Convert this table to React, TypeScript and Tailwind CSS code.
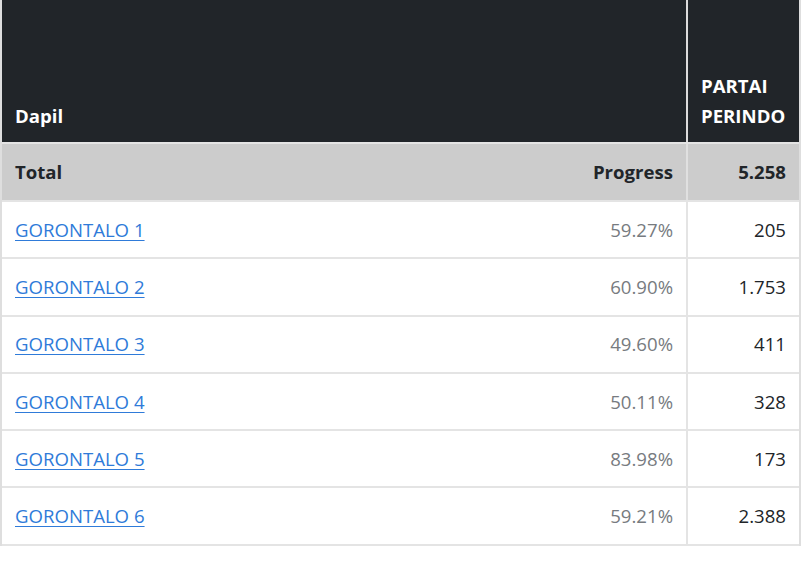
import React from "react";

const rows = [
  { name: "GORONTALO 1", pct: "59.27%", val: "205" },
  { name: "GORONTALO 2", pct: "60.90%", val: "1.753" },
  { name: "GORONTALO 3", pct: "49.60%", val: "411" },
  { name: "GORONTALO 4", pct: "50.11%", val: "328" },
  { name: "GORONTALO 5", pct: "83.98%", val: "173" },
  { name: "GORONTALO 6", pct: "59.21%", val: "2.388" },
];

export default function App() {
  return (
    <div
      className="w-[801px] h-[569px] bg-white text-[18.6px] text-[#212529]"
      style={{ fontFamily: '"Open Sans", "Noto Sans", sans-serif' }}
    >
      <div className="w-[801px] border-l-2 border-r-2 border-[#dedede]">
        {/* Header */}
        <div className="flex h-[142px] bg-[#212529] text-white font-bold">
          <div className="w-[684px] flex items-end px-[13px] pb-[11px] leading-[30px]">Dapil</div>
          <div className="w-[2px] bg-[#dcdcdc]" />
          <div className="flex-1 flex flex-col justify-end px-[13px] pb-[11px] leading-[30px]">
            <div>PARTAI</div>
            <div>PERINDO</div>
          </div>
        </div>
        {/* Total row */}
        <div className="flex h-[60px] bg-[#cccccc] font-bold border-t-2 border-b-2 border-[#e4e4e4]">
          <div className="w-[684px] flex items-center justify-between px-[13px]">
            <span>Total</span>
            <span>Progress</span>
          </div>
          <div className="w-[2px] bg-[#e0e0e0]" />
          <div className="flex-1 flex items-center justify-end px-[13px]">5.258</div>
        </div>
        {rows.map((r) => (
          <div key={r.name} className="flex h-[57.3px] border-b-2 border-[#e4e4e4]">
            <div className="w-[684px] flex items-center justify-between px-[13px]">
              <a href="#" className="text-[#2f7bd9] underline underline-offset-[3px]">
                {r.name}
              </a>
              <span className="text-[#777b80]">{r.pct}</span>
            </div>
            <div className="w-[2px] bg-[#e4e4e4]" />
            <div className="flex-1 flex items-center justify-end px-[13px]">{r.val}</div>
          </div>
        ))}
      </div>
    </div>
  );
}
